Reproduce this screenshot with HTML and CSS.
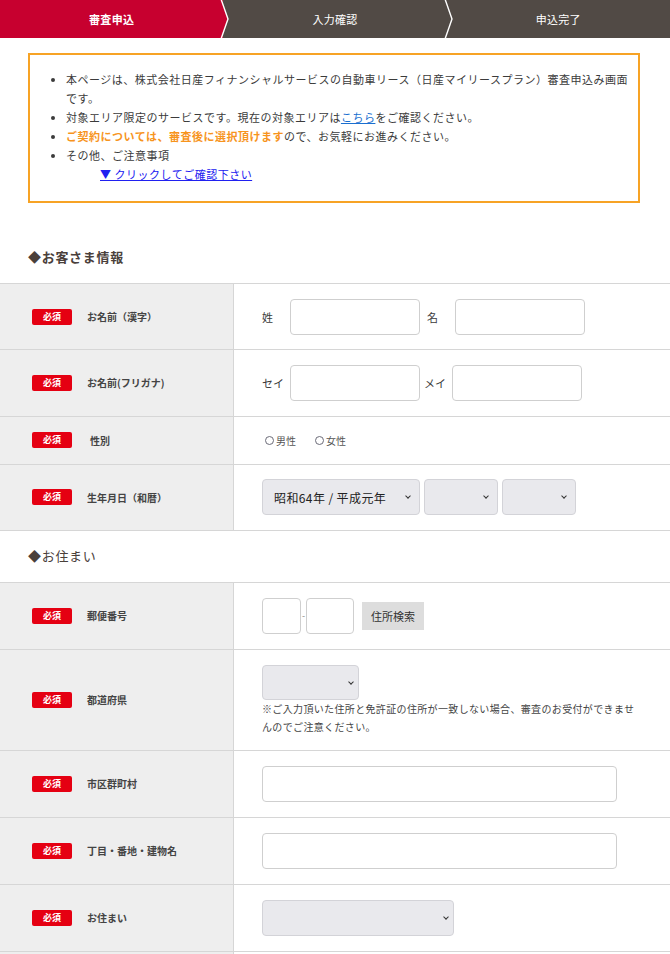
FILE: index.html
```html
<!DOCTYPE html>
<html lang="ja">
<head>
  <meta charset="UTF-8">
  <meta name="viewport" content="width=device-width, initial-scale=1.0">
  <title>審査申込</title>
  <link rel="stylesheet" href="styles.css">
</head>
<body>
  <header class="steps">
    <div class="step step-current">
      <span>審査申込</span>
      <svg class="step-arrow" width="10" height="38" viewBox="0 0 10 38"><polygon points="0,0 7,19 0,38" fill="#c7002f"/><polyline points="0,-1 7,19 0,39" fill="none" stroke="#fff" stroke-width="1.4"/></svg>
    </div>
    <div class="step">
      <span>入力確認</span>
      <svg class="step-arrow" width="10" height="38" viewBox="0 0 10 38"><polygon points="0,0 7,19 0,38" fill="#514a45"/><polyline points="0,-1 7,19 0,39" fill="none" stroke="#fff" stroke-width="1.4"/></svg>
    </div>
    <div class="step">
      <span>申込完了</span>
    </div>
  </header>

  <main class="form">
    <div class="notice">
      <ul>
        <li>本ページは、株式会社日産フィナンシャルサービスの自動車リース（日産マイリースプラン）審査申込み画面です。</li>
        <li>対象エリア限定のサービスです。現在の対象エリアは<a href="#" class="notice-link">こちら</a>をご確認ください。</li>
        <li><strong class="notice-strong">ご契約については、審査後に選択頂けます</strong>ので、お気軽にお進みください。</li>
        <li>その他、ご注意事項
          <a href="#" class="notice-more">▼ クリックしてご確認下さい</a>
        </li>
      </ul>
    </div>

    <h2 class="section-title">◆お客さま情報</h2>
    <div class="form-table">
      <div class="form-row">
        <div class="form-head"><span class="required">必須</span><span class="form-label">お名前（漢字）</span></div>
        <div class="form-body">
          <span class="name-label">姓</span><input type="text" class="text-input name-input">
          <span class="name-label name-label-wide">名</span><input type="text" class="text-input name-input">
        </div>
      </div>
      <div class="form-row">
        <div class="form-head"><span class="required">必須</span><span class="form-label">お名前(フリガナ)</span></div>
        <div class="form-body">
          <span class="name-label">セイ</span><input type="text" class="text-input name-input">
          <span class="name-label name-label-narrow">メイ</span><input type="text" class="text-input name-input">
        </div>
      </div>
      <div class="form-row form-row-short">
        <div class="form-head"><span class="required">必須</span><span class="form-label form-label-gender">性別</span></div>
        <div class="form-body">
          <label class="radio"><input type="radio" name="sex"><span>男性</span></label>
          <label class="radio"><input type="radio" name="sex"><span>女性</span></label>
        </div>
      </div>
      <div class="form-row">
        <div class="form-head"><span class="required">必須</span><span class="form-label">生年月日（和暦）</span></div>
        <div class="form-body">
          <span class="select-wrap"><select class="select select-era"><option>昭和64年 / 平成元年</option></select></span>
          <span class="select-wrap"><select class="select select-small"><option></option></select></span>
          <span class="select-wrap"><select class="select select-small"><option></option></select></span>
        </div>
      </div>
    </div>

    <h2 class="section-title section-title-light">◆お住まい</h2>
    <div class="form-table form-table-address">
      <div class="form-row">
        <div class="form-head"><span class="required">必須</span><span class="form-label">郵便番号</span></div>
        <div class="form-body">
          <input type="text" class="text-input zip-first"><span class="zip-dash">-</span><input type="text" class="text-input zip-second">
          <button type="button" class="zip-button">住所検索</button>
        </div>
      </div>
      <div class="form-row">
        <div class="form-head"><span class="required">必須</span><span class="form-label">都道府県</span></div>
        <div class="form-body form-body-block">
          <span class="select-wrap select-wrap-block select-wrap-tight"><select class="select select-pref"><option></option></select></span>
          <p class="form-note">※ご入力頂いた住所と免許証の住所が一致しない場合、審査のお受付ができませんのでご注意ください。</p>
        </div>
      </div>
      <div class="form-row">
        <div class="form-head"><span class="required">必須</span><span class="form-label">市区群町村</span></div>
        <div class="form-body"><input type="text" class="text-input wide-input"></div>
      </div>
      <div class="form-row">
        <div class="form-head"><span class="required">必須</span><span class="form-label">丁目・番地・建物名</span></div>
        <div class="form-body"><input type="text" class="text-input wide-input"></div>
      </div>
      <div class="form-row">
        <div class="form-head"><span class="required">必須</span><span class="form-label">お住まい</span></div>
        <div class="form-body"><span class="select-wrap select-wrap-tight"><select class="select select-home"><option></option></select></span></div>
      </div>
      <div class="form-row">
        <div class="form-head"></div>
        <div class="form-body"></div>
      </div>
    </div>
  </main>
</body>
</html>
```

FILE: styles.css
```css
body {
  margin: 0;
  font-family: "Noto Sans CJK JP", "Noto Sans", sans-serif;
  color: #3b3b3b;
  background: #fff;
}

.steps {
  display: flex;
  height: 38px;
  background: #514a45;
}

.step {
  position: relative;
  flex: 1;
  display: flex;
  align-items: center;
  justify-content: center;
  color: #fff;
  font-size: 11px;
  letter-spacing: 0.3px;
}

.step-current {
  background: #c7002f;
  font-weight: bold;
}

.step-arrow {
  position: absolute;
  top: 0;
  left: calc(100% - 2px);
  z-index: 1;
  overflow: visible;
}

.notice {
  margin: 15px 30px 0 28px;
  border: 2px solid #f7a325;
  padding: 15px 0 17px;
}

.notice ul {
  margin: 0;
  padding: 0 4px 0 36px;
  font-size: 11px;
  line-height: 19px;
  letter-spacing: 0.5px;
}

.notice-link {
  color: #1a6fd0;
}

.notice-strong {
  color: #f7941d;
}

.notice-more {
  display: block;
  padding-left: 34px;
  color: #2020f0;
}

.section-title {
  margin: 44px 0 16px 28px;
  font-size: 13px;
  line-height: 20px;
  letter-spacing: 0.7px;
  color: #4a403b;
}

.section-title-light {
  margin-top: 15px;
  font-weight: normal;
}

.form-table {
  border-bottom: 1px solid #d6d6d6;
}

.form-row {
  display: grid;
  grid-template-columns: 234px 1fr;
  border-top: 1px solid #d6d6d6;
}

.form-head {
  display: flex;
  align-items: center;
  padding-left: 32px;
  background: #eeeeee;
  border-right: 1px solid #d6d6d6;
}

.required {
  display: inline-block;
  width: 40px;
  height: 16px;
  line-height: 16px;
  border-radius: 2px;
  background: #e50012;
  color: #fff;
  font-size: 9px;
  font-weight: bold;
  text-align: center;
}

.form-label {
  margin-left: 15px;
  font-size: 10px;
  font-weight: bold;
  color: #444;
}

.form-label-gender {
  margin-left: 18px;
}

.form-body {
  display: flex;
  align-items: center;
  min-height: 65.3px;
  padding: 0 29px 0 28px;
  font-size: 11px;
}

.form-table-address .form-body {
  min-height: 66px;
}

.form-row-short .form-body {
  min-height: 47px;
}

.form-table-address .form-body-block,
.form-body-block {
  display: block;
  min-height: 0;
  padding-top: 15px;
  padding-bottom: 14px;
}

.name-label {
  width: 28px;
  flex: none;
}

.name-label-wide {
  margin-left: 7px;
}

.name-label-narrow {
  margin-left: 4px;
}

.text-input {
  box-sizing: border-box;
  height: 36px;
  border: 1px solid #cfcfcf;
  border-radius: 4px;
  background: #fff;
  padding: 0 6px;
  font: inherit;
}

.name-input {
  width: 130px;
}

.wide-input {
  width: 355px;
}

.zip-first {
  width: 39px;
}

.zip-dash {
  width: 5px;
  text-align: center;
  font-size: 9px;
  color: #888;
}

.zip-second {
  width: 48px;
}

.zip-button {
  margin-left: 8px;
  height: 28px;
  width: 62px;
  padding: 0;
  border: none;
  background: #dddddd;
  font-family: inherit;
  font-size: 11px;
  color: #333;
}

.radio {
  display: flex;
  align-items: center;
  margin-right: 16px;
  font-size: 10px;
  color: #555;
}

.radio input {
  appearance: none;
  width: 9px;
  height: 9px;
  margin: 0 2px 0 3px;
  border: 1px solid #6b6b78;
  border-radius: 50%;
}

.select-wrap {
  position: relative;
  display: inline-block;
  margin-right: 4px;
}

.select-wrap-block {
  display: block;
  width: 97px;
}

.select-wrap::after {
  content: "";
  position: absolute;
  top: 15px;
  right: 10px;
  width: 3px;
  height: 3px;
  border-right: 1.3px solid #333;
  border-bottom: 1.3px solid #333;
  transform: rotate(45deg);
  pointer-events: none;
}

.select-wrap-tight::after {
  right: 6px;
}

.select {
  display: block;
  box-sizing: border-box;
  height: 36px;
  appearance: none;
  border: 1px solid #d3d3d8;
  border-radius: 4px;
  background-color: #e9e9ed;
  font-family: inherit;
  font-size: 12px;
  letter-spacing: 0.4px;
  color: #222;
  padding-left: 11px;
}

.select-era {
  width: 158px;
}

.select-small {
  width: 74px;
}

.select-pref {
  width: 97px;
  height: 35px;
}

.select-home {
  width: 192px;
}

.form-note {
  margin: 0;
  max-width: 378px;
  font-size: 10px;
  line-height: 18px;
  letter-spacing: 0.35px;
  color: #444;
}
```
